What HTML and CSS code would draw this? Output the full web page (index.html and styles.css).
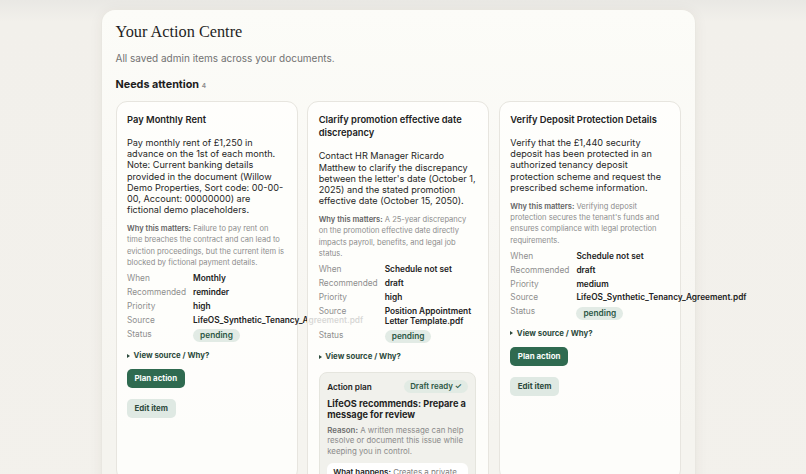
FILE: index.html
```html
<!DOCTYPE html>
<html lang="en">
<head>
<meta charset="utf-8">
<title>Your Action Centre</title>
<link rel="stylesheet" href="styles.css">
</head>
<body>
<div class="page">
  <section class="panel">
    <h1 class="title">Your Action Centre</h1>
    <p class="subtitle">All saved admin items across your documents.</p>
    <h2 class="section-title">Needs attention <span class="count">4</span></h2>
    <div class="cards">
      <article class="card">
        <h3 class="card-title">Pay Monthly Rent</h3>
        <p class="card-desc">Pay monthly rent of £1,250 in advance on the 1st of each month. Note: Current banking details provided in the document (Willow Demo Properties, Sort code: 00-00-00, Account: 00000000) are fictional demo placeholders.</p>
        <p class="why"><strong>Why this matters:</strong> Failure to pay rent on time breaches the contract and can lead to eviction proceedings, but the current item is blocked by fictional payment details.</p>
        <dl class="meta">
          <dt>When</dt><dd>Monthly</dd>
          <dt>Recommended</dt><dd>reminder</dd>
          <dt>Priority</dt><dd>high</dd>
          <dt>Source</dt><dd>LifeOS_Synthetic_Tenancy_Agreement.pdf</dd>
          <dt>Status</dt><dd><span class="pill">pending</span></dd>
        </dl>
        <details class="source"><summary>View source / Why?</summary></details>
        <div class="actions">
          <button class="btn btn-primary" type="button">Plan action</button>
          <button class="btn btn-secondary" type="button">Edit item</button>
        </div>
      </article>

      <article class="card">
        <h3 class="card-title">Clarify promotion effective date discrepancy</h3>
        <p class="card-desc">Contact HR Manager Ricardo Matthew to clarify the discrepancy between the letter's date (October 1, 2025) and the stated promotion effective date (October 15, 2050).</p>
        <p class="why"><strong>Why this matters:</strong> A 25-year discrepancy on the promotion effective date directly impacts payroll, benefits, and legal job status.</p>
        <dl class="meta">
          <dt>When</dt><dd>Schedule not set</dd>
          <dt>Recommended</dt><dd>draft</dd>
          <dt>Priority</dt><dd>high</dd>
          <dt>Source</dt><dd>Position Appointment Letter Template.pdf</dd>
          <dt>Status</dt><dd><span class="pill">pending</span></dd>
        </dl>
        <details class="source"><summary>View source / Why?</summary></details>
        <div class="plan">
          <div class="plan-head">
            <span class="plan-label">Action plan</span>
            <span class="plan-pill">Draft ready ✓</span>
          </div>
          <p class="plan-title">LifeOS recommends: Prepare a message for review</p>
          <p class="plan-reason"><strong>Reason:</strong> A written message can help resolve or document this issue while keeping you in control.</p>
          <div class="plan-box">
            <p><strong>What happens:</strong> Creates a private draft you can review before anything is sent.</p>
          </div>
        </div>
      </article>

      <article class="card">
        <h3 class="card-title">Verify Deposit Protection Details</h3>
        <p class="card-desc">Verify that the £1,440 security deposit has been protected in an authorized tenancy deposit protection scheme and request the prescribed scheme information.</p>
        <p class="why"><strong>Why this matters:</strong> Verifying deposit protection secures the tenant's funds and ensures compliance with legal protection requirements.</p>
        <dl class="meta">
          <dt>When</dt><dd>Schedule not set</dd>
          <dt>Recommended</dt><dd>draft</dd>
          <dt>Priority</dt><dd>medium</dd>
          <dt>Source</dt><dd>LifeOS_Synthetic_Tenancy_Agreement.pdf</dd>
          <dt>Status</dt><dd><span class="pill">pending</span></dd>
        </dl>
        <details class="source"><summary>View source / Why?</summary></details>
        <div class="actions">
          <button class="btn btn-primary" type="button">Plan action</button>
          <button class="btn btn-secondary" type="button">Edit item</button>
        </div>
      </article>
    </div>
  </section>
</div>
</body>
</html>
```
FILE: styles.css
```css
* { box-sizing: border-box; }

html, body {
  margin: 0;
  padding: 0;
}

body {
  background: linear-gradient(#e9e8e4 0, #f2f0eb 22px, #f3f1ec 100%);
  font-family: Inter, "Noto Sans", "Liberation Sans", sans-serif;
  color: #232323;
  min-height: 474px;
}

.page {
  padding: 9px 110px 0 101px;
}

.panel {
  background: linear-gradient(#fcfcf8 0, #f9f8f4 200px, #f5f4ef 420px);
  border: 1px solid #e9e7e1;
  border-bottom: none;
  border-radius: 14px 14px 0 0;
  box-shadow: 0 2px 14px rgba(60, 50, 30, 0.06);
  padding: 12px 14px 40px 13.5px;
  min-height: 480px;
}

.title {
  margin: 0;
  font-family: "Liberation Serif", "DejaVu Serif", serif;
  font-weight: 400;
  font-size: 16.3px;
  line-height: 20px;
  color: #1f1f1f;
}

.subtitle {
  margin: 9px 0 0;
  font-size: 10px;
  line-height: 14px;
  color: #727272;
}

.section-title {
  margin: 11.5px 0 0;
  font-size: 10.8px;
  line-height: 15px;
  font-weight: 700;
  color: #1d1d1d;
}

.count {
  font-size: 6.5px;
  font-weight: 600;
  color: #8a8a8a;
}

.cards {
  margin-top: 7.5px;
  display: grid;
  grid-template-columns: repeat(3, 1fr);
  gap: 9.5px;
  align-items: start;
}

.card {
  background: rgba(255, 255, 253, 0.82);
  border: 1px solid #e7e5df;
  border-radius: 11px;
  padding: 11px 12px 30px 10.5px;
  min-height: 380px;
  min-width: 0;
}

.card-title {
  margin: 0;
  font-size: 9.35px;
  line-height: 13.4px;
  font-weight: 600;
  color: #222;
}

.card-desc {
  margin: 10.5px 0 0;
  font-size: 9.15px;
  line-height: 11.2px;
  color: #262626;
}

.why {
  margin: 7.8px 0 0;
  font-size: 7.55px;
  line-height: 11.3px;
  color: #8d8d8d;
}

.why strong {
  font-weight: 600;
  color: #636363;
}

.meta {
  margin: 5.1px 0 0;
  display: grid;
  grid-template-columns: auto 1fr;
  column-gap: 7px;
  row-gap: 3.8px;
  align-items: start;
  font-size: 8.3px;
  line-height: 10px;
}

.meta dt {
  color: #8e8e8e;
}

.meta dd {
  margin: 0;
  font-weight: 600;
  color: #222;
}

.pill {
  display: inline-block;
  margin-top: 0.7px;
  padding: 2px 7px;
  line-height: 9px;
  border-radius: 7px;
  background: #e2ebe5;
  color: #2d5845;
  font-weight: 600;
}

.source {
  margin-top: 8px;
}

.source summary {
  list-style: none;
  font-size: 7.8px;
  line-height: 11px;
  font-weight: 700;
  color: #2c4a3c;
  cursor: pointer;
}

.source summary::-webkit-details-marker { display: none; }

.source summary::before {
  content: "";
  display: inline-block;
  width: 0;
  height: 0;
  border-left: 3.6px solid #2c4a3c;
  border-top: 2.3px solid transparent;
  border-bottom: 2.3px solid transparent;
  margin-right: 3.5px;
  vertical-align: 0.5px;
}

.actions {
  margin-top: 8px;
  display: flex;
  flex-direction: column;
  align-items: flex-start;
  gap: 11px;
}

.btn {
  font-family: inherit;
  border: none;
  height: 19px;
  padding: 0 7.5px;
  border-radius: 5px;
  font-size: 7.9px;
  font-weight: 700;
  line-height: 19px;
  cursor: pointer;
}

.btn-primary {
  background: #2f6a50;
  color: #fafdfb;
}

.btn-secondary {
  background: #dfe9e3;
  color: #2f4b3e;
}

.plan {
  margin-top: 9.5px;
  background: #f1f1ec;
  border: 1px solid #e5e5de;
  border-radius: 8px;
  padding: 7.5px 7.5px 8px;
}

.plan-head {
  display: flex;
  justify-content: space-between;
  align-items: center;
}

.plan-label {
  font-size: 8.2px;
  font-weight: 600;
  color: #222;
}

.plan-pill {
  font-size: 7.9px;
  line-height: 8.7px;
  font-weight: 600;
  color: #2d5845;
  background: #e2ebe4;
  border-radius: 7px;
  padding: 2px 6px;
}

.plan-title {
  margin: 6px 0 0;
  font-size: 9.2px;
  line-height: 10.6px;
  font-weight: 700;
  color: #1f1f1f;
}

.plan-reason {
  margin: 4.5px 0 0;
  font-size: 7.9px;
  line-height: 10.5px;
  color: #8b8b8b;
}

.plan-reason strong {
  font-weight: 600;
  color: #6e6e6e;
}

.plan-box {
  margin-top: 7px;
  background: #ffffff;
  border-radius: 6px;
  padding: 4px 6px;
}

.plan-box p {
  margin: 0;
  font-size: 7.9px;
  line-height: 10.5px;
  color: #7d7d7d;
}

.plan-box strong {
  font-weight: 600;
  color: #222;
}
```
